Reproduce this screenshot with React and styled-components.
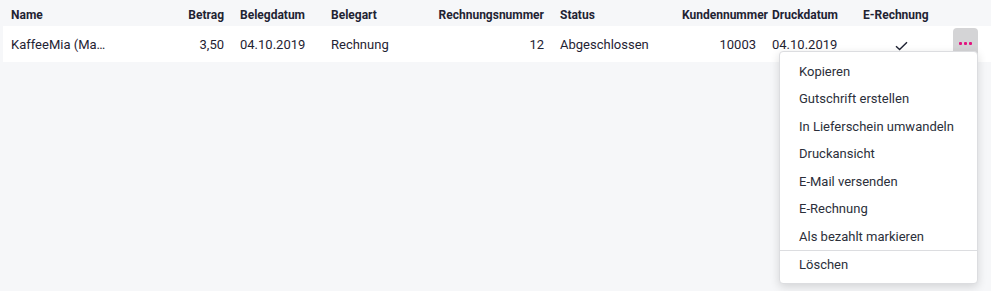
import React from 'react';
import styled, { createGlobalStyle } from 'styled-components';

const GlobalStyle = createGlobalStyle`
  html, body {
    margin: 0;
    padding: 0;
    background: #f6f7f9;
    font-family: Roboto, "Liberation Sans", sans-serif;
    color: #1f2333;
  }
`;

const columns = [
  { key: 'name', label: 'Name', align: 'left' },
  { key: 'betrag', label: 'Betrag', align: 'right' },
  { key: 'belegdatum', label: 'Belegdatum', align: 'left' },
  { key: 'belegart', label: 'Belegart', align: 'left' },
  { key: 'nummer', label: 'Rechnungsnummer', align: 'right' },
  { key: 'status', label: 'Status', align: 'left' },
  { key: 'kunde', label: 'Kundennummer', align: 'right', tight: true },
  { key: 'druck', label: 'Druckdatum', align: 'left' },
  { key: 'erechnung', label: 'E-Rechnung', align: 'left', bodyAlign: 'center' },
];

const row = {
  name: 'KaffeeMia (Ma…',
  betrag: '3,50',
  belegdatum: '04.10.2019',
  belegart: 'Rechnung',
  nummer: '12',
  status: 'Abgeschlossen',
  kunde: '10003',
  druck: '04.10.2019',
  erechnung: true,
};

const menuItems = [
  'Kopieren',
  'Gutschrift erstellen',
  'In Lieferschein umwandeln',
  'Druckansicht',
  'E-Mail versenden',
  'E-Rechnung',
  'Als bezahlt markieren',
];

const App = () => (
  <>
    <GlobalStyle />
    <StyledPage>
      <StyledHeadRow>
        {columns.map(col => (
          <StyledHeadCell key={col.key} $align={col.align} $tight={col.tight}>
            {col.label}
          </StyledHeadCell>
        ))}
        <div />
      </StyledHeadRow>
      <StyledRow>
        {columns.map(col => (
          <StyledCell key={col.key} $align={col.bodyAlign || col.align}>
            {col.key === 'erechnung' ? (
              row.erechnung && (
                <svg width="13" height="10" viewBox="0 0 13 10">
                  <path
                    d="M1 5.2 L4.6 8.6 L12 1.2"
                    fill="none"
                    stroke="#1f2333"
                    strokeWidth="1.4"
                  />
                </svg>
              )
            ) : (
              row[col.key]
            )}
          </StyledCell>
        ))}
        <StyledActions>
          <StyledMoreBtn>
            <span />
            <span />
            <span />
          </StyledMoreBtn>
          <StyledMenu>
            {menuItems.map(item => (
              <StyledMenuItem key={item}>{item}</StyledMenuItem>
            ))}
            <StyledDivider />
            <StyledMenuItem>Löschen</StyledMenuItem>
          </StyledMenu>
        </StyledActions>
      </StyledRow>
    </StyledPage>
  </>
);

const grid = `
  display: grid;
  grid-template-columns: 110px 119px 91px 100px 129px 122px 90px 91px 92px 1fr;
`;

const StyledPage = styled.div`
  width: 988px;
  height: 291px;
  padding-left: 3px;
  overflow: hidden;
`;

const StyledHeadRow = styled.div`
  ${grid}
  height: 26px;
  align-items: center;
`;

const StyledHeadCell = styled.div`
  padding: 4px ${({ $tight }) => ($tight ? '0' : '8px')} 0 8px;
  text-align: ${({ $align }) => $align};
  font-size: 12px;
  font-weight: 700;
  white-space: nowrap;
`;

const StyledRow = styled.div`
  ${grid}
  height: 36px;
  align-items: center;
  background: #fff;
`;

const StyledCell = styled.div`
  padding: 2px 8px 0;
  text-align: ${({ $align }) => $align};
  font-size: 13px;
  white-space: nowrap;
  overflow: hidden;
  line-height: 18px;

  svg {
    display: inline-block;
    vertical-align: middle;
  }
`;

const StyledActions = styled.div`
  position: relative;
  height: 100%;
  padding-left: 6px;
  display: flex;
  align-items: flex-start;
  padding-top: 3px;
`;

const StyledMoreBtn = styled.button`
  display: flex;
  align-items: center;
  justify-content: center;
  gap: 2.5px;
  width: 25px;
  height: 32px;
  padding: 0;
  border: none;
  border-radius: 4px;
  background: #d4d4d6;
  cursor: pointer;

  span {
    width: 2.5px;
    height: 2.5px;
    border-radius: 1px;
    background: #e2137e;
  }
`;

const StyledMenu = styled.div`
  position: absolute;
  top: 26px;
  right: 13px;
  width: 199px;
  padding: 6px 0 4px;
  background: #fff;
  border: 1px solid #dcdde0;
  border-radius: 4px;
  box-shadow: 0 3px 10px rgba(0, 0, 0, 0.14);
  box-sizing: border-box;
`;

const StyledMenuItem = styled.div`
  height: 27.5px;
  display: flex;
  align-items: center;
  padding-left: 19px;
  font-size: 13px;
  color: #2b2f3a;
  white-space: nowrap;
  cursor: pointer;
`;

const StyledDivider = styled.div`
  height: 1px;
  background: #dcdde0;
`;

export default App;
